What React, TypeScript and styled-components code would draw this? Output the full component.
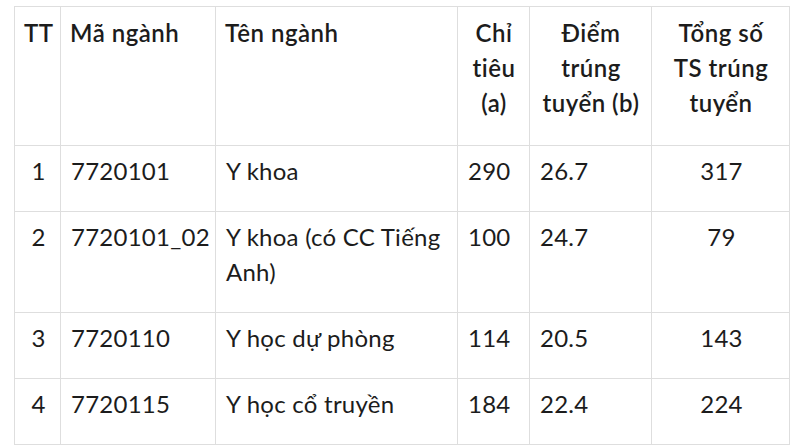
import React from 'react'
import styled, { createGlobalStyle } from 'styled-components';

type Row = {
  tt: string;
  code: string;
  name: string;
  quota: string;
  score: string;
  total: string;
}

const rows: Row[] = [
  { tt: '1', code: '7720101', name: 'Y khoa', quota: '290', score: '26.7', total: '317' },
  { tt: '2', code: '7720101_02', name: 'Y khoa (có CC Tiếng Anh)', quota: '100', score: '24.7', total: '79' },
  { tt: '3', code: '7720110', name: 'Y học dự phòng', quota: '114', score: '20.5', total: '143' },
  { tt: '4', code: '7720115', name: 'Y học cổ truyền', quota: '184', score: '22.4', total: '224' },
];

const GlobalStyle = createGlobalStyle`
  html, body {
    margin: 0;
    padding: 0;
    background: #fff;
    overflow: hidden;
  }
  body {
    font-family: Lato, "Noto Sans", sans-serif;
    color: #1c1c1c;
  }
`;

const App: React.FC = () => {
  return (
    <Page>
      <GlobalStyle />
      <ScoreTable>
        <colgroup>
          <col style={{ width: 46 }} />
          <col style={{ width: 155 }} />
          <col style={{ width: 242 }} />
          <col style={{ width: 72 }} />
          <col style={{ width: 122 }} />
          <col />
        </colgroup>
        <thead>
          <tr>
            <HeadCell>TT</HeadCell>
            <HeadCell>Mã ngành</HeadCell>
            <HeadCell>Tên ngành</HeadCell>
            <HeadCell center>Chỉ<br />tiêu<br />(a)</HeadCell>
            <HeadCell center>Điểm<br />trúng<br />tuyển (b)</HeadCell>
            <HeadCell center>Tổng số<br />TS trúng<br />tuyển</HeadCell>
          </tr>
        </thead>
        <tbody>
          {rows.map((r) => (
            <tr key={r.tt}>
              <Cell center>{r.tt}</Cell>
              <Cell>{r.code}</Cell>
              <Cell>{r.name}</Cell>
              <Cell>{r.quota}</Cell>
              <Cell>{r.score}</Cell>
              <Cell center>{r.total}</Cell>
            </tr>
          ))}
        </tbody>
      </ScoreTable>
    </Page>
  )
}

const Page = styled.div`
  padding: 6px 0 0 14px;
  width: 792px;
  height: 446px;
  box-sizing: border-box;
  overflow: hidden;
`;

const ScoreTable = styled.table`
  width: 776px;
  border-collapse: collapse;
  table-layout: fixed;
  font-size: 24px;
  line-height: 35px;
`;

const Cell = styled.td<{ center?: boolean }>`
  border: 1px solid #dedede;
  padding: 7px 8px 23px 10px;
  vertical-align: top;
  letter-spacing: 0.25px;
  text-align: ${({ center }) => center ? 'center' : 'left'};
`;

const HeadCell = styled.th<{ center?: boolean }>`
  border: 1px solid #dedede;
  padding: 8px 8px 25px 9px;
  vertical-align: top;
  font-weight: 600;
  letter-spacing: 0.5px;
  text-align: ${({ center }) => center ? 'center' : 'left'};
`;

export default App;
